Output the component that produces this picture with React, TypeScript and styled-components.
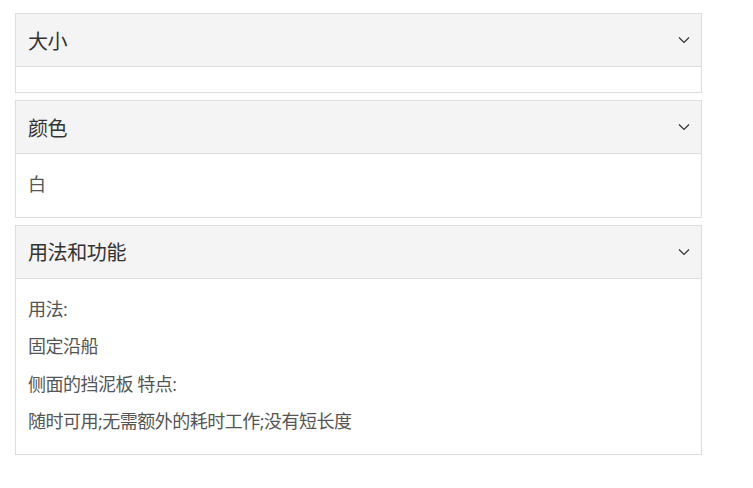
import React, { useState } from 'react';
import styled, { createGlobalStyle } from 'styled-components';

const GlobalStyle = createGlobalStyle`
  html, body {
    margin: 0;
    padding: 0;
    background: #fff;
  }
  body {
    font-family: "Open Sans", "Noto Sans CJK SC", sans-serif;
  }
`;

const StyledPage = styled.div`
  width: 687px;
  padding: 13px 0 0 15px;
  display: flex;
  flex-direction: column;
  gap: 7px;
`;

const StyledPanel = styled.div`
  border: 1px solid #dddddd;
  background: #fff;
`;

const StyledHeader = styled.div`
  height: 52px;
  display: flex;
  align-items: center;
  justify-content: space-between;
  padding: 0 11px 0 12px;
  background-color: #f4f4f4;
  border-bottom: 1px solid #dddddd;
  cursor: pointer;
`;

const StyledTitle = styled.span`
  font-size: 20px;
  color: #333333;
  letter-spacing: -0.4px;
`;

const StyledBody = styled.div`
  padding: 12px 12px 13px;
  font-size: 18px;
  color: #555555;
  letter-spacing: -0.5px;
`;

const StyledLine = styled.p`
  margin: 0;
  line-height: 37.5px;
`;

const Chevron = () => (
  <svg width="12" height="8" viewBox="0 0 12 8" fill="none">
    <path d="M1 1.5 L6 6.5 L11 1.5" stroke="#333" strokeWidth="1.2" />
  </svg>
);

const sections = [
  { title: '大小', lines: [] as string[] },
  { title: '颜色', lines: ['白'] },
  {
    title: '用法和功能',
    lines: ['用法:', '固定沿船', '侧面的挡泥板 特点:', '随时可用;无需额外的耗时工作;没有短长度'],
  },
];

export default function App() {
  const [open] = useState([true, true, true]);

  return (
    <>
      <GlobalStyle />
      <StyledPage>
        {sections.map((section, index) => (
          <StyledPanel key={index}>
            <StyledHeader>
              <StyledTitle>{section.title}</StyledTitle>
              <Chevron />
            </StyledHeader>
            {open[index] && (
              <StyledBody>
                {section.lines.map((line, i) => (
                  <StyledLine key={i}>{line}</StyledLine>
                ))}
              </StyledBody>
            )}
          </StyledPanel>
        ))}
      </StyledPage>
    </>
  );
}
